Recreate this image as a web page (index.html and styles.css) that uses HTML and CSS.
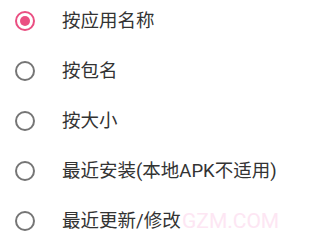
FILE: index.html
```html
<!DOCTYPE html>
<html lang="zh-CN">
<head>
<meta charset="utf-8">
<link rel="stylesheet" href="styles.css">
</head>
<body>
<div class="list">
  <div class="row"><span class="radio checked"></span><span class="label">按应用名称</span></div>
  <div class="row"><span class="radio"></span><span class="label">按包名</span></div>
  <div class="row"><span class="radio"></span><span class="label">按大小</span></div>
  <div class="row"><span class="radio"></span><span class="label">最近安装(本地APK不适用)</span></div>
  <div class="row"><span class="radio"></span><span class="label">最近更新/修改</span></div>
</div>
<div class="watermark">GZM.COM</div>
</body>
</html>
```
FILE: styles.css
```css
html, body {
  margin: 0;
  padding: 0;
  background: #ffffff;
  width: 336px;
  height: 245px;
  overflow: hidden;
  position: relative;
}
.list {
  display: flex;
  flex-direction: column;
  margin-top: -4px;
}
.row {
  height: 50px;
  display: flex;
  align-items: center;
  padding-left: 15px;
  gap: 27px;
}
.radio {
  width: 20px;
  height: 20px;
  box-sizing: border-box;
  border: 2px solid #757575;
  border-radius: 50%;
  flex: none;
  display: flex;
  align-items: center;
  justify-content: center;
}
.radio.checked {
  border-color: #ea4f82;
}
.radio.checked::after {
  content: "";
  width: 10px;
  height: 10px;
  border-radius: 50%;
  background: #ea4f82;
}
.label {
  font-family: Roboto, "Noto Sans CJK SC", sans-serif;
  font-size: 18.5px;
  color: #333333;
  line-height: 1;
  position: relative;
  z-index: 1;
}
.watermark {
  position: absolute;
  left: 182px;
  top: 211px;
  font-family: Roboto, sans-serif;
  font-size: 21px;
  line-height: 1;
  color: #fde6f3;
}
```
